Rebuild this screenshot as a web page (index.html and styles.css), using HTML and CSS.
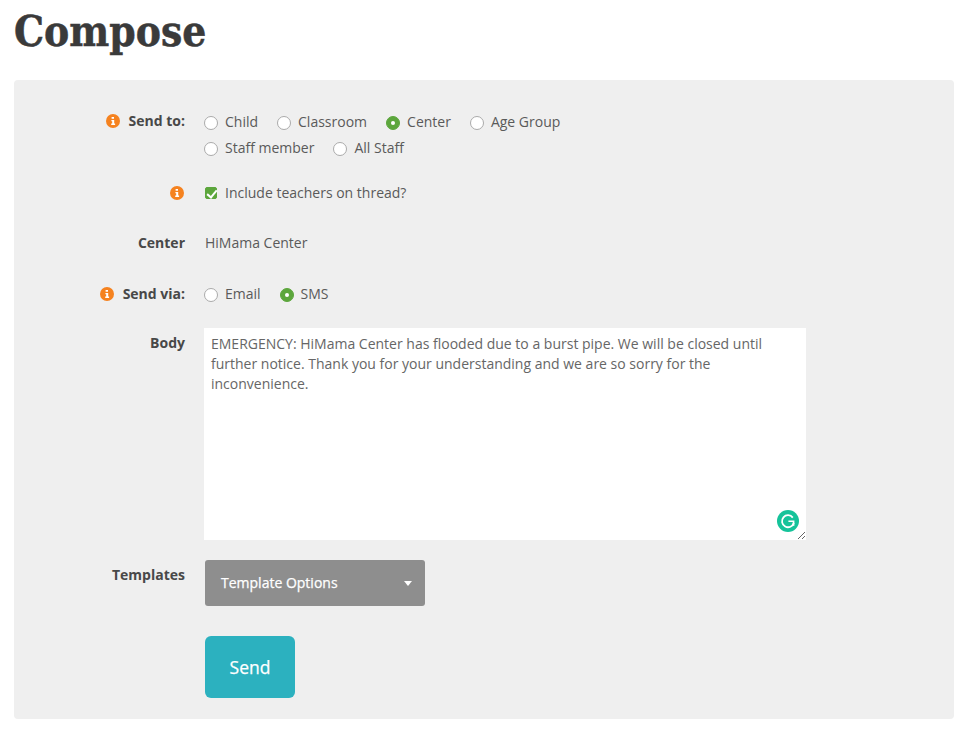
FILE: index.html
```html
<!DOCTYPE html>
<html lang="en">
<head>
<meta charset="utf-8">
<title>Compose</title>
<link rel="stylesheet" href="styles.css">
</head>
<body>
<h1 class="title">Compose</h1>
<form class="panel">
  <div class="row row-sendto">
    <div class="label">
      <svg class="info" viewBox="0 0 14 14"><circle cx="7" cy="7" r="7" fill="#f5821f"/><path d="M5.6 3h2.4v1.8H5.6zM5.4 6h2.8v3.6h.9V11H5.2V9.6h1V7.3h-.8z" fill="#fff"/></svg>
      <span>Send to:</span>
    </div>
    <div class="field radios">
      <label class="opt"><input type="radio" name="to"><span>Child</span></label>
      <label class="opt"><input type="radio" name="to"><span>Classroom</span></label>
      <label class="opt"><input type="radio" name="to" checked><span>Center</span></label>
      <label class="opt"><input type="radio" name="to"><span>Age Group</span></label>
      <label class="opt"><input type="radio" name="to"><span>Staff member</span></label>
      <label class="opt"><input type="radio" name="to"><span>All Staff</span></label>
    </div>
  </div>
  <div class="row row-include">
    <div class="label">
      <svg class="info" viewBox="0 0 14 14"><circle cx="7" cy="7" r="7" fill="#f5821f"/><path d="M5.6 3h2.4v1.8H5.6zM5.4 6h2.8v3.6h.9V11H5.2V9.6h1V7.3h-.8z" fill="#fff"/></svg>
    </div>
    <div class="field">
      <label class="opt"><input class="check" type="checkbox" checked><span>Include teachers on thread?</span></label>
    </div>
  </div>
  <div class="row row-center">
    <div class="label"><span>Center</span></div>
    <div class="field">HiMama Center</div>
  </div>
  <div class="row row-via">
    <div class="label">
      <svg class="info" viewBox="0 0 14 14"><circle cx="7" cy="7" r="7" fill="#f5821f"/><path d="M5.6 3h2.4v1.8H5.6zM5.4 6h2.8v3.6h.9V11H5.2V9.6h1V7.3h-.8z" fill="#fff"/></svg>
      <span>Send via:</span>
    </div>
    <div class="field radios">
      <label class="opt"><input type="radio" name="via"><span>Email</span></label>
      <label class="opt"><input type="radio" name="via" checked><span>SMS</span></label>
    </div>
  </div>
  <div class="row row-body">
    <div class="label"><span>Body</span></div>
    <div class="field body-wrap">
      <textarea class="body-input">EMERGENCY: HiMama Center has flooded due to a burst pipe. We will be closed until further notice. Thank you for your understanding and we are so sorry for the inconvenience.</textarea>
      <svg class="grammarly" viewBox="0 0 22 22"><circle cx="11" cy="11" r="11" fill="#15c39a"/><path d="M15.8 7.6a6 6 0 1 0 1 5.2" fill="none" stroke="#fff" stroke-width="1.8"/><path d="M11.4 11.2h5.2v4.6" fill="none" stroke="#fff" stroke-width="1.6"/></svg>
    </div>
  </div>
  <div class="row row-templates">
    <div class="label"><span>Templates</span></div>
    <div class="field">
      <button type="button" class="dropdown"><span>Template Options</span><i class="caret"></i></button>
    </div>
  </div>
  <div class="row row-send">
    <div class="label"></div>
    <div class="field"><button type="button" class="send">Send</button></div>
  </div>
</form>
</body>
</html>
```
FILE: styles.css
```css
* { box-sizing: border-box; }
html, body { margin: 0; padding: 0; background: #fff; }
body {
  font-family: "Open Sans", "Noto Sans", sans-serif;
  font-size: 14px;
  line-height: 20px;
  color: #5a5a5a;
  padding: 0 15px 0 14px;
  height: 733px;
  overflow: hidden;
}
.title {
  margin: 0;
  height: 80px;
  padding-top: 6px;
  font-family: "DejaVu Serif Condensed", "DejaVu Serif", serif;
  font-weight: 700;
  font-size: 42px;
  line-height: 52px;
  color: #3a3a3a;
  -webkit-text-stroke: 0.5px #3a3a3a;
}
.panel {
  background: #efefef;
  border-radius: 4px;
  height: 639px;
  padding-top: 29px;
}
.row { display: flex; }
.label {
  width: 171px;
  flex: none;
  display: flex;
  justify-content: flex-end;
  align-items: center;
  gap: 8px;
  font-weight: 700;
  color: #484848;
  height: 24px;
}
.field { margin-left: 19px; flex: none; }
.info { width: 14px; height: 14px; flex: none; position: relative; left: -1px; }
.radios { display: flex; flex-wrap: wrap; width: 400px; row-gap: 6px; column-gap: 19px; }
.opt { display: flex; align-items: center; height: 20px; gap: 7px; color: #5a5a5a; }
.opt input {
  appearance: none;
  margin: 0;
  width: 14px;
  height: 14px;
  flex: none;
  background: #fff;
  border: 1px solid #aaa;
  border-radius: 50%;
  position: relative;
  top: 1px;
}
.opt input:checked {
  background: #5ca63c;
  border-color: #5ca63c;
}
.opt input[type="radio"]:checked::after {
  content: "";
  position: absolute;
  left: 4px;
  top: 4px;
  width: 4px;
  height: 4px;
  border-radius: 50%;
  background: #fff;
}
.opt input.check {
  width: 12px;
  height: 12px;
  border-radius: 2px;
  margin-left: 1px;
  margin-right: 1px;
  top: 0;
}
.opt input.check::after {
  content: "";
  position: absolute;
  left: 3px;
  top: 0;
  width: 4px;
  height: 8px;
  border: solid #fff;
  border-width: 0 2px 2px 0;
  transform: rotate(40deg);
}
.row-sendto .field { padding-top: 3px; }
.row-include { margin-top: 25px; }
.row-include .label { height: 20px; justify-content: flex-end; }
.row-center { margin-top: 28px; height: 24px; }
.row-center .field { padding-top: 2px; padding-left: 1px; }
.row-via { margin-top: 27px; }
.row-via .field { padding-top: 2px; }
.row-body { margin-top: 22px; }
.row-body .label { height: 30px; }
.body-wrap { position: relative; height: 212px; }
.body-input {
  display: block;
  width: 602px;
  height: 212px;
  border: 0;
  outline: 0;
  background: #fff;
  padding: 6px 7px;
  font: 14px/20px "Open Sans", "Noto Sans", sans-serif;
  color: #666;
  margin: 0;
  resize: both;
  overflow: hidden;
}
.grammarly { position: absolute; left: 573px; top: 182px; width: 22px; height: 22px; }
.row-templates { margin-top: 20px; }
.row-templates .label { height: 30px; }
.row-templates .field { margin-left: 20px; }
.dropdown {
  display: flex;
  align-items: center;
  justify-content: space-between;
  width: 220px;
  height: 46px;
  padding: 0 13px 0 16px;
  border: 0;
  border-radius: 3px;
  background: #8e8e8e;
  color: #fff;
  font: 400 14px/20px "Open Sans", "Noto Sans", sans-serif;
  -webkit-text-stroke: 0.25px #fff;
}
.caret {
  width: 0; height: 0;
  border-left: 4.5px solid transparent;
  border-right: 4.5px solid transparent;
  border-top: 5px solid #fff;
}
.row-send { margin-top: 30px; }
.row-send .field { margin-left: 20px; }
.send {
  display: block;
  width: 90px;
  height: 62px;
  border: 0;
  border-radius: 6px;
  background: #2cb1bf;
  color: #fff;
  font: 400 17.5px/24px "Open Sans", "Noto Sans", sans-serif;
  -webkit-text-stroke: 0.25px #fff;
}
```
